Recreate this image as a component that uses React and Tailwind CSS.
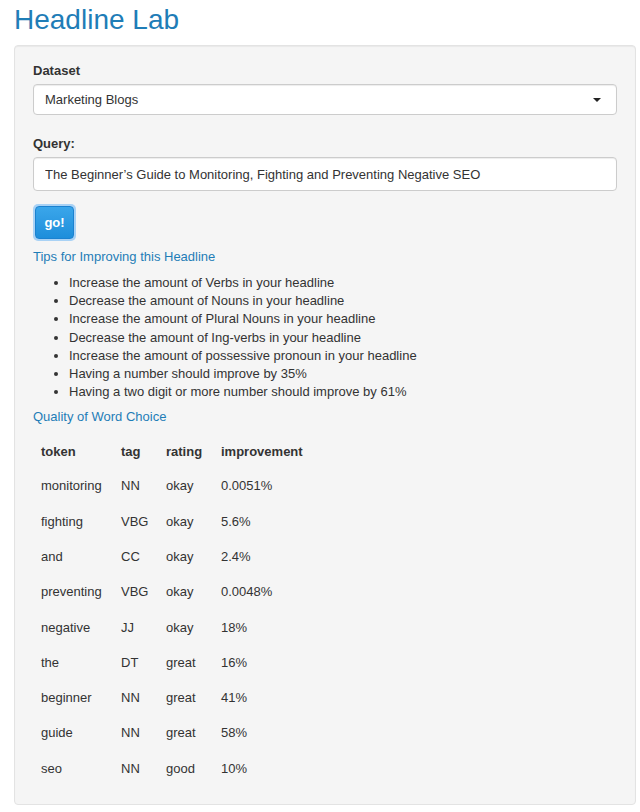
import { useState } from "react"

const tips = [
  "Increase the amount of Verbs in your headline",
  "Decrease the amount of Nouns in your headline",
  "Increase the amount of Plural Nouns in your headline",
  "Decrease the amount of Ing-verbs in your headline",
  "Increase the amount of possessive pronoun in your headline",
  "Having a number should improve by 35%",
  "Having a two digit or more number should improve by 61%",
]

const rows = [
  ["monitoring", "NN", "okay", "0.0051%"],
  ["fighting", "VBG", "okay", "5.6%"],
  ["and", "CC", "okay", "2.4%"],
  ["preventing", "VBG", "okay", "0.0048%"],
  ["negative", "JJ", "okay", "18%"],
  ["the", "DT", "great", "16%"],
  ["beginner", "NN", "great", "41%"],
  ["guide", "NN", "great", "58%"],
  ["seo", "NN", "good", "10%"],
]

export default function App() {
  const [query, setQuery] = useState(
    "The Beginner\u2019s Guide to Monitoring, Fighting and Preventing Negative SEO"
  )

  return (
    <div className="w-[640px] min-h-[812px] bg-white px-[14px] text-[13px] text-[#333] font-['Liberation_Sans',Arial,sans-serif]">
      <h1 className="pt-[3px] h-[45px] text-[28px] leading-[34px] font-normal text-[#1f7db7]">Headline Lab</h1>

      <div className="w-[622px] bg-[#f5f5f5] border border-[#e3e3e3] rounded-[4px] shadow-[inset_0_1px_1px_rgba(0,0,0,0.05)] px-[18px] pt-[16px] pb-[18px]">
        {/* Dataset select */}
        <label className="block font-bold leading-[18px] mb-[4px]">Dataset</label>
        <div className="relative w-[584px] h-[31px] bg-white border border-[#ccc] rounded-[4px] shadow-[inset_0_1px_1px_rgba(0,0,0,0.075)] flex items-center px-[11px]">
          <span>Marketing Blogs</span>
          <span className="absolute right-[15px] top-[13px] w-0 h-0 border-l-[4px] border-r-[4px] border-t-[4px] border-l-transparent border-r-transparent border-t-[#222]" />
        </div>

        {/* Query */}
        <label className="block font-bold leading-[18px] mt-[20px] mb-[4px]">Query:</label>
        <input
          value={query}
          onChange={(e) => setQuery(e.target.value)}
          className="block w-[584px] h-[34px] bg-white border border-[#ccc] rounded-[4px] shadow-[inset_0_1px_1px_rgba(0,0,0,0.075)] pl-[11px] pr-[11px] text-[13px] text-[#333] outline-none"
        />

        {/* Go button */}
        <div className="mt-[13px] w-[43px] h-[37px] rounded-[5px] bg-[#a9d2f5] p-[2px]">
          <button className="w-full h-full rounded-[4px] border border-[#1b82d0] bg-gradient-to-b from-[#3aa6ea] to-[#1d8edb] text-white font-bold text-[13px] leading-none">
            go!
          </button>
        </div>

        {/* Tips */}
        <h3 className="mt-[7px] leading-[18px] text-[#1f7db7] font-normal text-[13px]">Tips for Improving this Headline</h3>
        <ul className="mt-[8px] pl-[36px] list-disc leading-[18.2px]">
          {tips.map((t) => (
            <li key={t}>{t}</li>
          ))}
        </ul>

        <h3 className="mt-[7px] leading-[18px] text-[#1f7db7] font-normal text-[13px]">Quality of Word Choice</h3>

        {/* Table */}
        <table className="mt-[8px] border-collapse">
          <thead>
            <tr className="h-[34px]">
              <th className="text-left font-bold pl-[8px] pr-[8px]">token</th>
              <th className="text-left font-bold pr-[8px]">tag</th>
              <th className="text-left font-bold pr-[8px]">rating</th>
              <th className="text-left font-bold pr-[8px]">improvement</th>
            </tr>
          </thead>
          <tbody>
            {rows.map((r) => (
              <tr key={r[0]} className="h-[35.3px]">
                <td className="pl-[8px] w-[88px]">{r[0]}</td>
                <td className="w-[45px]">{r[1]}</td>
                <td className="w-[55px]">{r[2]}</td>
                <td>{r[3]}</td>
              </tr>
            ))}
          </tbody>
        </table>
      </div>
    </div>
  )
}
